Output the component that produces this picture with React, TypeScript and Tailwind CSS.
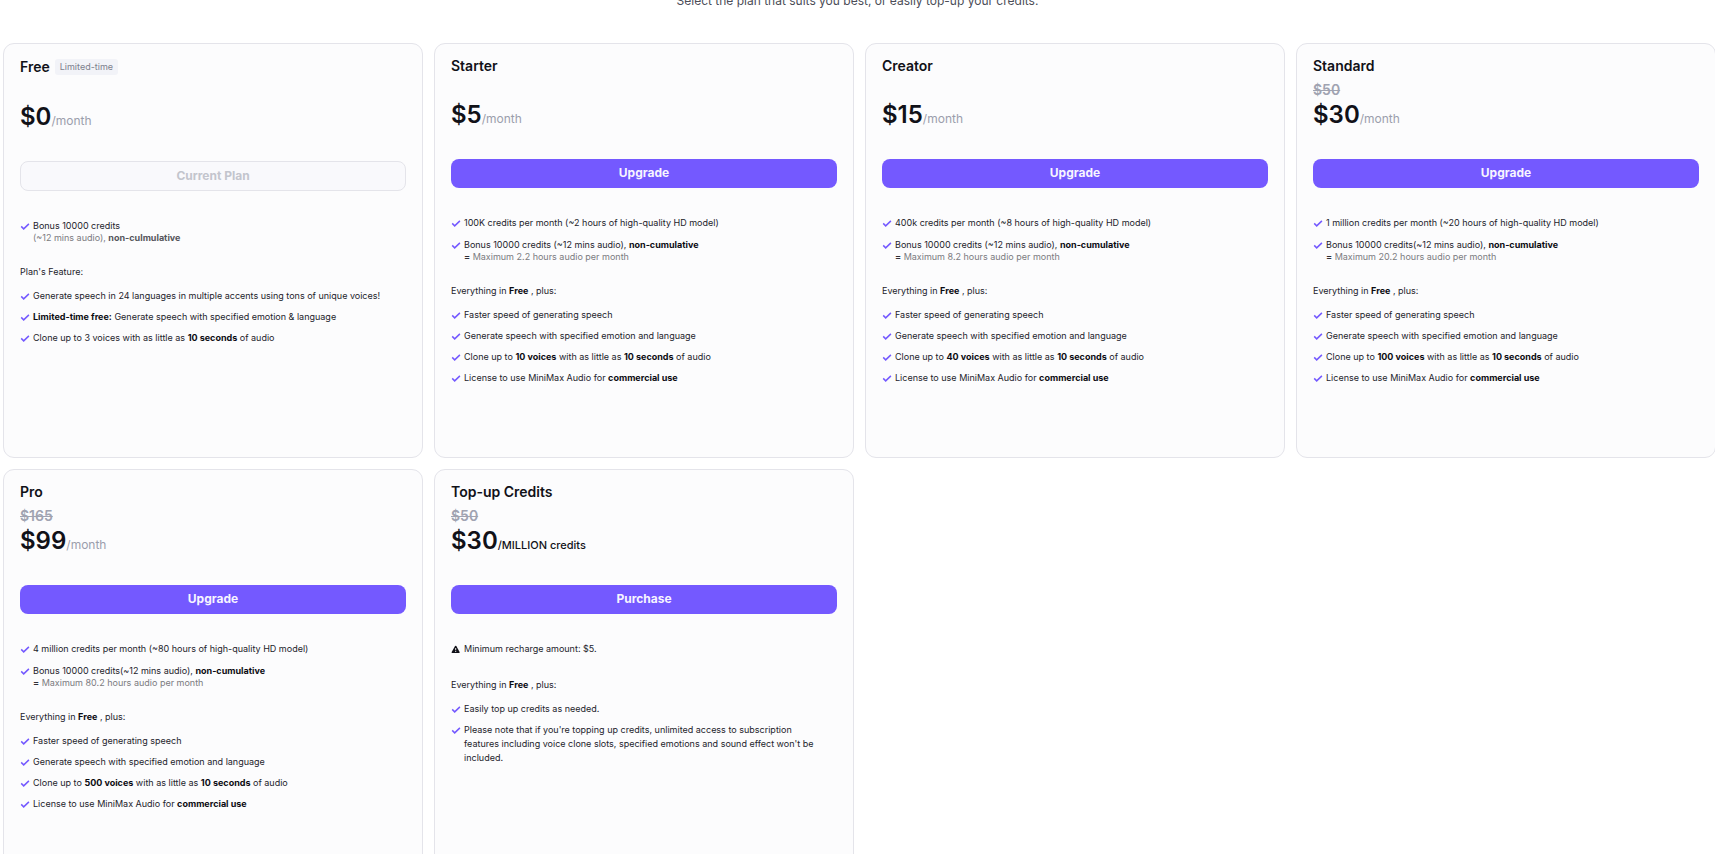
import type { ReactNode } from "react";

type Plan = {
  name: string;
  badge?: string;
  oldPrice?: string;
  price: string;
  unit: string;
  unitDark?: boolean;
  action: string;
  current?: boolean;
  warning?: string;
  credits: ReactNode[];
  heading: ReactNode;
  features: ReactNode[];
};

const B = ({ children }: { children: ReactNode }) => (
  <strong className="font-bold text-[#0b0b12]">{children}</strong>
);

const Sub = ({ children }: { children: ReactNode }) => (
  <span className="block leading-[10px] text-[#7b7b80]">{children}</span>
);

const CheckIcon = () => (
  <svg viewBox="0 0 10 14" className="h-[14px] w-[10px] shrink-0" fill="none" stroke="#7459ff" strokeWidth="1.5" aria-hidden="true">
    <path d="M1.2 7.4 L3.7 9.9 L8.9 4.9" />
  </svg>
);

const WarningIcon = () => (
  <svg viewBox="0 0 10 14" className="h-[14px] w-[10px] shrink-0" aria-hidden="true">
    <path d="M4.1 4.1 Q4.7 3.2 5.3 4.1 L8.6 10 Q9 11 8 11 L1.2 11 Q0.2 11 0.7 10 Z" fill="#111118" />
    <path d="M4.7 6 V8.3 M4.7 9 V10" stroke="#fcfcfd" strokeWidth="0.9" />
  </svg>
);

const everything = (
  <>
    Everything in <B>Free</B> , plus:
  </>
);

const bonus = (hours: string, spaced: boolean) => (
  <>
    Bonus 10000 credits{spaced ? " " : ""}(~12 mins audio), <B>non-cumulative</B>
    <Sub>
      <b className="text-[#303036]">=</b> Maximum {hours} hours audio per month
    </Sub>
  </>
);

const paidFeatures = (voices: number): ReactNode[] => [
  "Faster speed of generating speech",
  "Generate speech with specified emotion and language",
  <>
    Clone up to <B>{voices} voices</B> with as little as <B>10 seconds</B> of audio
  </>,
  <>
    License to use MiniMax Audio for <B>commercial use</B>
  </>,
];

const plans: Plan[] = [
  {
    name: "Free",
    badge: "Limited-time",
    price: "$0",
    unit: "/month",
    action: "Current Plan",
    current: true,
    credits: [
      <>
        Bonus 10000 credits
        <Sub>
          (~12 mins audio), <b className="text-[#55555b]">non-culmulative</b>
        </Sub>
      </>,
    ],
    heading: "Plan's Feature:",
    features: [
      "Generate speech in 24 languages in multiple accents using tons of unique voices!",
      <>
        <B>Limited-time free:</B> Generate speech with specified emotion &amp; language
      </>,
      <>
        Clone up to 3 voices with as little as <B>10 seconds</B> of audio
      </>,
    ],
  },
  {
    name: "Starter",
    price: "$5",
    unit: "/month",
    action: "Upgrade",
    credits: ["100K credits per month (~2 hours of high-quality HD model)", bonus("2.2", true)],
    heading: everything,
    features: paidFeatures(10),
  },
  {
    name: "Creator",
    price: "$15",
    unit: "/month",
    action: "Upgrade",
    credits: ["400k credits per month (~8 hours of high-quality HD model)", bonus("8.2", true)],
    heading: everything,
    features: paidFeatures(40),
  },
  {
    name: "Standard",
    oldPrice: "$50",
    price: "$30",
    unit: "/month",
    action: "Upgrade",
    credits: ["1 million credits per month (~20 hours of high-quality HD model)", bonus("20.2", false)],
    heading: everything,
    features: paidFeatures(100),
  },
  {
    name: "Pro",
    oldPrice: "$165",
    price: "$99",
    unit: "/month",
    action: "Upgrade",
    credits: ["4 million credits per month (~80 hours of high-quality HD model)", bonus("80.2", false)],
    heading: everything,
    features: paidFeatures(500),
  },
  {
    name: "Top-up Credits",
    oldPrice: "$50",
    price: "$30",
    unit: "/MILLION credits",
    unitDark: true,
    action: "Purchase",
    warning: "Minimum recharge amount: $5.",
    credits: [],
    heading: everything,
    features: [
      "Easily top up credits as needed.",
      <>
        Please note that if you're topping up credits, unlimited access to subscription
        <br />
        features including voice clone slots, specified emotions and sound effect won't be
        <br />
        included.
      </>,
    ],
  },
];

const Item = ({ icon, children }: { icon: ReactNode; children: ReactNode }) => (
  <li className="flex gap-[3px]">
    {icon}
    <div className="min-w-0">{children}</div>
  </li>
);

const PlanCard = ({ plan }: { plan: Plan }) => (
  <article className="min-h-[415px] rounded-[11px] border border-[#e4e4ea] bg-[#fcfcfd] px-4 pt-[13px] pb-4">
    <div className="flex items-center gap-[5px]">
      <h2 className="text-[14px] leading-[18px] font-semibold text-[#111118]">{plan.name}</h2>
      {plan.badge && (
        <span className="my-[2px] rounded-[3px] bg-[#f2f3f8] px-[5px] text-[9px] leading-[16px] text-[#7d808c]">
          {plan.badge}
        </span>
      )}
    </div>
    <div className="mt-[5px] h-5 text-[14px] leading-[20px] font-semibold text-[#a0a3b1]">
      {plan.oldPrice && <s>{plan.oldPrice}</s>}
    </div>
    <p className="flex items-baseline">
      <span className="text-[24px] leading-[30px] font-semibold text-[#111118]">{plan.price}</span>
      <span
        className={
          plan.unitDark
            ? "text-[11px] leading-[14px] font-medium text-[#111118]"
            : "text-[12px] leading-[14px] text-[#9b9eac]"
        }
      >
        {plan.unit}
      </span>
    </p>
    {plan.current ? (
      <button
        type="button"
        disabled
        className="mt-[29px] block h-[30px] w-full rounded-[8px] border border-[#e4e4ea] bg-[#f9f9fc] text-[12px] leading-[26px] font-bold text-[#c3c5cd]"
      >
        {plan.action}
      </button>
    ) : (
      <button
        type="button"
        className="mt-[29px] block h-[29px] w-full rounded-[8px] bg-[#7459ff] pb-[2px] text-[12px] leading-[26px] font-bold text-[#f7f5ff]"
      >
        {plan.action}
      </button>
    )}
    <div className="mt-7 text-[9px] leading-[14px] text-[#23232b]">
      <ul className="flex flex-col gap-2">
        {plan.warning && <Item icon={<WarningIcon />}>{plan.warning}</Item>}
        {plan.credits.map((c, i) => (
          <Item key={i} icon={<CheckIcon />}>
            {c}
          </Item>
        ))}
      </ul>
      <h3 className="mt-[22px]">{plan.heading}</h3>
      <ul className="mt-[10px] flex flex-col gap-[7px]">
        {plan.features.map((f, i) => (
          <Item key={i} icon={<CheckIcon />}>
            {f}
          </Item>
        ))}
      </ul>
    </div>
  </article>
);

export default function App() {
  return (
    <main className="h-screen overflow-hidden bg-white font-['Inter',sans-serif]">
      <p className="-mt-2 text-center text-[12px] leading-[18px] text-[#4b4d57]">
        Select the plan that suits you best, or easily top-up your credits.
      </p>
      <section className="mt-[33px] -mr-px ml-[3px] grid grid-cols-4 gap-[11px]">
        {plans.map((plan) => (
          <PlanCard key={plan.name} plan={plan} />
        ))}
      </section>
    </main>
  );
}
